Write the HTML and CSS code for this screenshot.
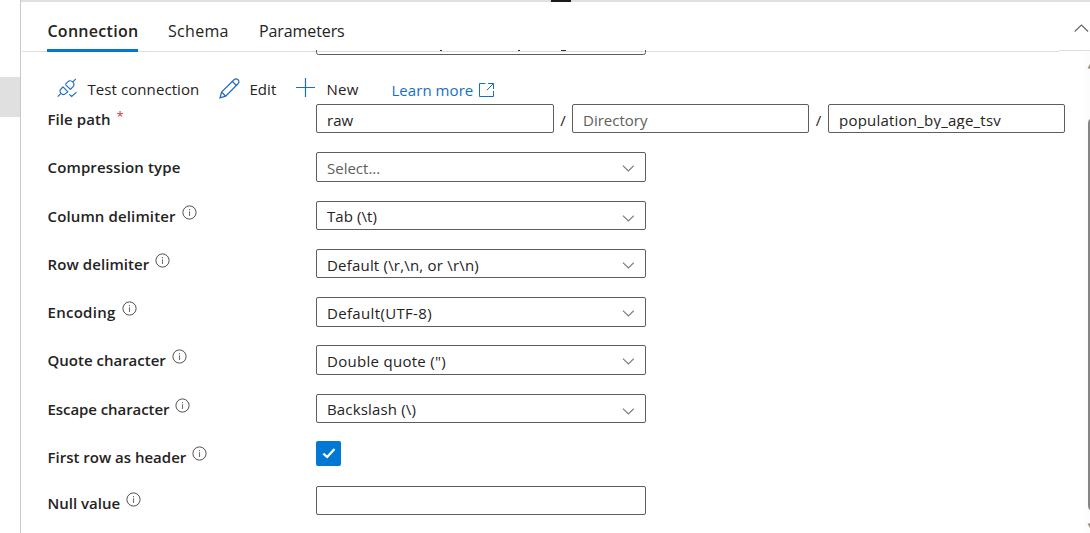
FILE: index.html
```html
<!DOCTYPE html>
<html lang="en">
<head>
<meta charset="utf-8">
<title>Dataset connection</title>
<link rel="stylesheet" href="styles.css">
</head>
<body>
<svg class="defs" aria-hidden="true">
  <symbol id="info" viewBox="0 0 15 15"><circle cx="7.5" cy="7.500" r="6.600" fill="none" stroke="#55504d" stroke-width="1"/><path d="M7.500 6.300V11M7.500 4V5.200" stroke="#77706c" stroke-width="1.100"/></symbol>
  <symbol id="down" viewBox="0 0 12 7"><path d="M.9.700 6.400 6 11.800.700" fill="none" stroke="#7a7876" stroke-width="1.100"/></symbol>
</svg>
<div class="app">
  <aside class="rail"><div class="rail-handle"></div></aside>
  <main class="panel">
    <div class="splitter"><span class="splitter-grip"></span></div>
    <nav class="tabs">
      <a class="tab active">Connection</a>
      <a class="tab schema">Schema</a>
      <a class="tab params">Parameters</a>
      <svg class="collapse" viewBox="0 0 16 9"><path d="M1.700 7.500 8.400 1 15.100 7.500" fill="none" stroke="#6b6461" stroke-width="1.200"/></svg>
    </nav>
    <div class="content">
      <div class="form">
        <div class="linked">
          <svg viewBox="0 0 330 6"><path d="M.5 0V2.500Q.5 4.500 2.500 4.500H327.500Q329.500 4.500 329.500 2.500V0" fill="none" stroke="#605e5c"/><path d="M124 .5h2M202 .5h2M245 .5h5" stroke="#323130"/></svg>
          <span class="line-end"></span>
        </div>
        <div class="toolbar">
          <svg class="i-plug" viewBox="0 0 20 20" fill="none" stroke="#1f6cbf" stroke-width="1.150"><path d="M.7 18.700 4 15.300M15.500 4.400 18.800.9M8.200 6.300 13.600 11.700M5.800 8.700 11.200 14.100M8.300 6.400 10.800 3.800C12.300 2.200 14.300 2.500 15.600 3.900 17 5.200 17.300 7.300 15.900 8.900L13.300 11.500M6 8.900 4 11C2.600 12.400 2.700 14 4 15.300 5.400 16.700 7.200 16.800 8.600 15.600L10.900 13.700M12.300 16.300 14.700 18.500 19.500 14.100"/></svg>
          <span class="t-test">Test connection</span>
          <svg class="i-edit" viewBox="0 0 21 21" fill="none" stroke="#1f6cbf" stroke-width="1.250"><path d="M1 19.800 2.600 14 15 1.700C16.300.5 17.900.7 19 1.800 20.200 3 20.300 4.500 19 5.800L6.700 18.200ZM13.300 3.400 17.300 7.500M2.600 14 6.700 18.200"/></svg>
          <span class="t-edit">Edit</span>
          <svg class="i-new" viewBox="0 0 19 19"><path d="M9.500 0V19M0 9.500H19" stroke="#1570c4" stroke-width="1.200"/></svg>
          <span class="t-new">New</span>
          <a class="learn">Learn more</a>
          <svg class="i-open" viewBox="0 0 15 15" fill="none" stroke="#1570c4"><path d="M6.500.5H.5V13.500H14.500V8M9 .5H14.500V6M14.300.7 7.800 7.200"/></svg>
        </div>

        <div class="row r48">
          <div class="label"><span class="l-file">File path</span><span class="star">*</span></div>
          <div class="path">
            <div class="field h29">raw</div><span class="slash">/</span>
            <div class="field h29 hint">Directory</div><span class="slash">/</span>
            <div class="field h29"><span class="v-pop">population_by_age_tsv</span></div>
          </div>
        </div>
        <div class="row r49">
          <div class="label"><span class="l-comp">Compression type</span></div>
          <div class="field h30 hint">Select...<svg class="chev"><use href="#down"/></svg></div>
        </div>
        <div class="row r48">
          <div class="label"><span class="l-col">Column delimiter</span><svg class="info"><use href="#info"/></svg></div>
          <div class="field h29 up"><span class="v-tab">Tab (\t)</span><svg class="chev"><use href="#down"/></svg></div>
        </div>
        <div class="row r48">
          <div class="label"><span class="l-row">Row delimiter</span><svg class="info"><use href="#info"/></svg></div>
          <div class="field h29"><span class="v-row">Default (\r,\n, or \r\n)</span><svg class="chev"><use href="#down"/></svg></div>
        </div>
        <div class="row r48">
          <div class="label"><span class="l-enc">Encoding</span><svg class="info"><use href="#info"/></svg></div>
          <div class="field h30"><span class="v-utf">Default(UTF-8)</span><svg class="chev"><use href="#down"/></svg></div>
        </div>
        <div class="row r49">
          <div class="label"><span>Quote character</span><svg class="info"><use href="#info"/></svg></div>
          <div class="field h30"><span class="v-quote">Double quote (")</span><svg class="chev"><use href="#down"/></svg></div>
        </div>
        <div class="row r47">
          <div class="label"><span class="l-esc">Escape character</span><svg class="info"><use href="#info"/></svg></div>
          <div class="field h29 up"><span class="v-back">Backslash (\)</span><svg class="chev"><use href="#down"/></svg></div>
        </div>
        <div class="row r45">
          <div class="label low1"><span>First row as header</span><svg class="info"><use href="#info"/></svg></div>
          <div class="check"><svg viewBox="0 0 25 25"><path d="M7.300 12.600 11.200 16 18.500 8" fill="none" stroke="#fff" stroke-width="2.300"/></svg></div>
        </div>
        <div class="row r47">
          <div class="label low2"><span>Null value</span><svg class="info"><use href="#info"/></svg></div>
          <div class="field h29"></div>
        </div>
      </div>
      <div class="scrollbar">
        <svg viewBox="0 0 6 483"><path d="M6 14 3.500 18.500H6ZM6 478 3.500 473.500H6Z" fill="#9b8b7d"/><path d="M6 69Q4 70 4 74V455Q4 459 6 460Z" fill="#858585"/></svg>
      </div>
    </div>
  </main>
</div>
</body>
</html>
```
FILE: styles.css
```css
* { box-sizing: border-box; }
body {
  margin: 0;
  background: #fff;
  color: #242322;
  font: 15px/20px "Open Sans", "Noto Sans", sans-serif;
  overflow: hidden;
}
svg { display: block; flex: none; }
.defs { display: none; }
.app { display: flex; width: 1090px; height: 533px; overflow: hidden; }

.rail { width: 21px; flex: none; padding-top: 77px; border-right: 1px solid #c8c8c8; }
.rail-handle { height: 40px; background: #e0e0e0; }
.panel { flex: 1; min-width: 0; display: flex; flex-direction: column; }

.splitter { height: 2px; background: #e0e0e0; flex: none; }
.splitter-grip { display: block; width: 20px; height: 2px; margin-left: 530px; background: #1b1a19; }

.tabs { display: flex; align-items: flex-start; height: 48px; padding-left: 26px; flex: none; font-size: 16px; z-index: 1; }
.tab { height: 50px; padding-top: 19px; white-space: nowrap; }
.tab.active { width: 91px; padding-left: .4px; font-weight: 600; letter-spacing: .29px; border-bottom: 3px solid #0078d4; }
.tab.schema { width: 61px; margin-left: 30px; letter-spacing: .3px; }
.tab.params { width: 86px; margin-left: 30px; letter-spacing: -.1px; }
.collapse { width: 16px; height: 9px; margin: 22px 1px 0 auto; }

.content { flex: 1; display: flex; min-height: 0; }
.form { flex: 1; padding-left: 26px; }
.linked { display: flex; align-items: flex-start; height: 26px; margin-left: -25px; padding-left: 294px; background: linear-gradient(#dedede, #dedede) 0 1px / 1037px 1px no-repeat; }
.linked svg { width: 330px; height: 6px; }
.line-end { width: 25px; height: 1px; margin-left: auto; background: #dedede; }

.toolbar { display: flex; align-items: flex-start; height: 28px; padding-left: 10px; white-space: nowrap; }
.i-plug { width: 20px; height: 20px; margin-top: 2px; }
.t-test { width: 112px; margin: 3px 0 0 10px; padding-left: .4px; letter-spacing: .09px; }
.i-edit { width: 21px; height: 21px; margin: 2px 0 0 20px; }
.t-edit { width: 27px; margin: 3px 0 0 9px; padding-left: .4px; letter-spacing: .09px; }
.i-new { width: 19px; height: 19px; margin: 2px 0 0 20px; }
.t-new { width: 32px; margin: 3px 0 0 11px; padding-left: .5px; letter-spacing: .3px; }
.learn { width: 82px; margin: 4px 0 0 33px; padding-left: .4px; color: #1570c4; letter-spacing: .07px; }
.i-open { width: 15px; height: 15px; margin: 7px 0 0 6px; }

.row { display: flex; align-items: flex-start; }
.r45 { height: 45px; }
.r47 { height: 47px; }
.r48 { height: 48px; }
.r49 { height: 49px; }
.label { display: flex; align-items: flex-start; width: 269px; padding: 5px 0 0 .5px; font-weight: 600; flex: none; white-space: nowrap; }
.low1 { padding-top: 6px; }
.low2 { padding-top: 7px; }
.info { width: 15px; height: 15px; margin: -1px 0 0 6px; }
.star { margin: -3px 0 0 6px; color: #d13438; font-size: 13px; font-weight: 400; }

.field { display: flex; align-items: flex-start; width: 330px; padding: 5px 11px 0 10px; border: 1px solid #605e5c; border-radius: 2px; background: #fff; white-space: nowrap; }
.h29 { height: 29px; }
.h30 { height: 30px; }
.up { padding-top: 4px; }
.up .chev { margin-top: 9px; }
.hint { color: #605e5c; }
.chev { width: 12px; height: 7px; margin: 7px 0 0 auto; }
.path { display: flex; align-items: flex-start; }
.path .field { width: 238px; }
.path .field:nth-of-type(n+2) { width: 237px; }
.slash { width: 18px; padding: 6px 0 0; text-align: center; }
.path .slash ~ .slash { width: 19px; }
.check { width: 25px; height: 25px; border-radius: 2px; background: #0078d4; }

.l-file { letter-spacing: .07px; }
.l-comp { letter-spacing: .14px; }
.l-col { letter-spacing: .13px; }
.l-row { letter-spacing: .09px; }
.l-enc { letter-spacing: .27px; }
.l-esc { letter-spacing: -.07px; }
.v-pop { height: 19px; overflow: hidden; letter-spacing: .22px; }
.v-tab { letter-spacing: .08px; }
.v-row { letter-spacing: .2px; }
.v-utf { letter-spacing: .34px; }
.v-quote { letter-spacing: .29px; }
.v-back { letter-spacing: .16px; }

.scrollbar { width: 6px; flex: none; background: linear-gradient(#dedede, #dedede) 0 0 / 100% 1px no-repeat #fcfcfc; }
.scrollbar svg { width: 6px; height: 483px; }
```
